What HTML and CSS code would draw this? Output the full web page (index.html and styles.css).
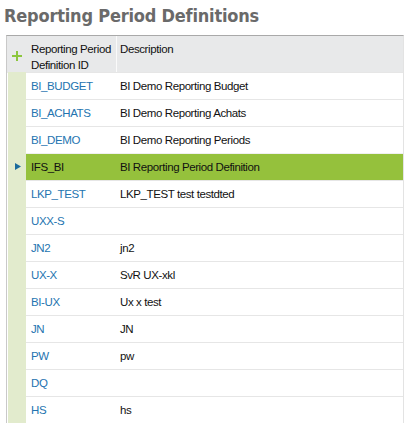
FILE: index.html
```html
<!DOCTYPE html>
<html>
<head>
<meta charset="utf-8">
<link rel="stylesheet" href="styles.css">
</head>
<body>
<h1 class="title">Reporting Period Definitions</h1>
<div class="grid">
  <div class="row head">
    <div class="gut"><svg class="plus" width="10" height="10" viewBox="0 0 10 10"><path d="M5 0v10M0 5h10" stroke="#8cc63e" stroke-width="2"/></svg></div>
    <div class="c id">Reporting Period<br>Definition ID</div>
    <div class="c desc">Description</div>
  </div>
  <div class="row"><div class="gut"></div><div class="c id link">BI_BUDGET</div><div class="c desc">BI Demo Reporting Budget</div></div>
  <div class="row"><div class="gut"></div><div class="c id link">BI_ACHATS</div><div class="c desc">BI Demo Reporting Achats</div></div>
  <div class="row"><div class="gut"></div><div class="c id link">BI_DEMO</div><div class="c desc">BI Demo Reporting Periods</div></div>
  <div class="row sel"><div class="gut"><svg class="arrow" width="6" height="7" viewBox="0 0 6 7"><path d="M0 0L6 3.5L0 7Z" fill="#1b6b9c"/></svg></div><div class="c id">IFS_BI</div><div class="c desc">BI Reporting Period Definition</div></div>
  <div class="row"><div class="gut"></div><div class="c id link">LKP_TEST</div><div class="c desc">LKP_TEST test testdted</div></div>
  <div class="row"><div class="gut"></div><div class="c id link">UXX-S</div><div class="c desc"></div></div>
  <div class="row"><div class="gut"></div><div class="c id link">JN2</div><div class="c desc">jn2</div></div>
  <div class="row"><div class="gut"></div><div class="c id link">UX-X</div><div class="c desc">SvR UX-xkl</div></div>
  <div class="row"><div class="gut"></div><div class="c id link">BI-UX</div><div class="c desc">Ux x test</div></div>
  <div class="row"><div class="gut"></div><div class="c id link">JN</div><div class="c desc">JN</div></div>
  <div class="row"><div class="gut"></div><div class="c id link">PW</div><div class="c desc">pw</div></div>
  <div class="row"><div class="gut"></div><div class="c id link">DQ</div><div class="c desc"></div></div>
  <div class="row"><div class="gut"></div><div class="c id link">HS</div><div class="c desc">hs</div></div>
</div>
</body>
</html>
```
FILE: styles.css
```css
html, body {
  margin: 0;
  padding: 0;
  background: #fff;
}
body {
  font-family: "Liberation Sans", Arial, sans-serif;
  font-size: 11.5px;
  letter-spacing: -0.4px;
  color: #111;
  overflow: hidden;
}
.title {
  margin: 0;
  padding: 5px 0 0 4px;
  height: 35px;
  box-sizing: border-box;
  font-family: "DejaVu Sans", sans-serif;
  font-stretch: condensed;
  font-weight: bold;
  font-size: 18px;
  line-height: 22px;
  color: #6a6a6a;
  letter-spacing: -0.2px;
}
.grid {
  margin-left: 6px;
  width: 398px;
  border-top: 1px solid #a9a9a9;
  border-left: 1px solid #c9c9c9;
  border-right: 1px solid #e3e3e3;
  box-sizing: border-box;
}
.row {
  display: grid;
  grid-template-columns: 19px 90px 1fr;
  height: 27px;
}
.row .gut {
  background: #e2ebcd;
  margin-left: 1px;
  display: flex;
  align-items: center;
  justify-content: center;
}
.row .c {
  border-top: 1px solid #e6e6e6;
  display: flex;
  align-items: center;
  white-space: nowrap;
}
.row .id {
  padding-left: 5px;
}
.row .desc {
  padding-left: 4px;
}
.link {
  color: #2474b0;
}
.row.head {
  height: 36px;
  background: #e8e9ea;
}
.row.head .gut {
  background: #e8e9ea;
  margin-left: 0;
  padding-top: 3px;
  padding-left: 1px;
}
.row.head .c {
  border-top: none;
  align-items: flex-start;
  padding-top: 5px;
  line-height: 16px;
  color: #111;
}
.row.head .desc {
  border-left: 1px solid #fafafa;
  padding-left: 3px;
}
.row.sel .c {
  background: #95c13c;
  border-top-color: #f0f0f0;
  background-clip: padding-box;
}
.row.sel .gut {
  justify-content: flex-start;
  padding-left: 7px;
}
```
